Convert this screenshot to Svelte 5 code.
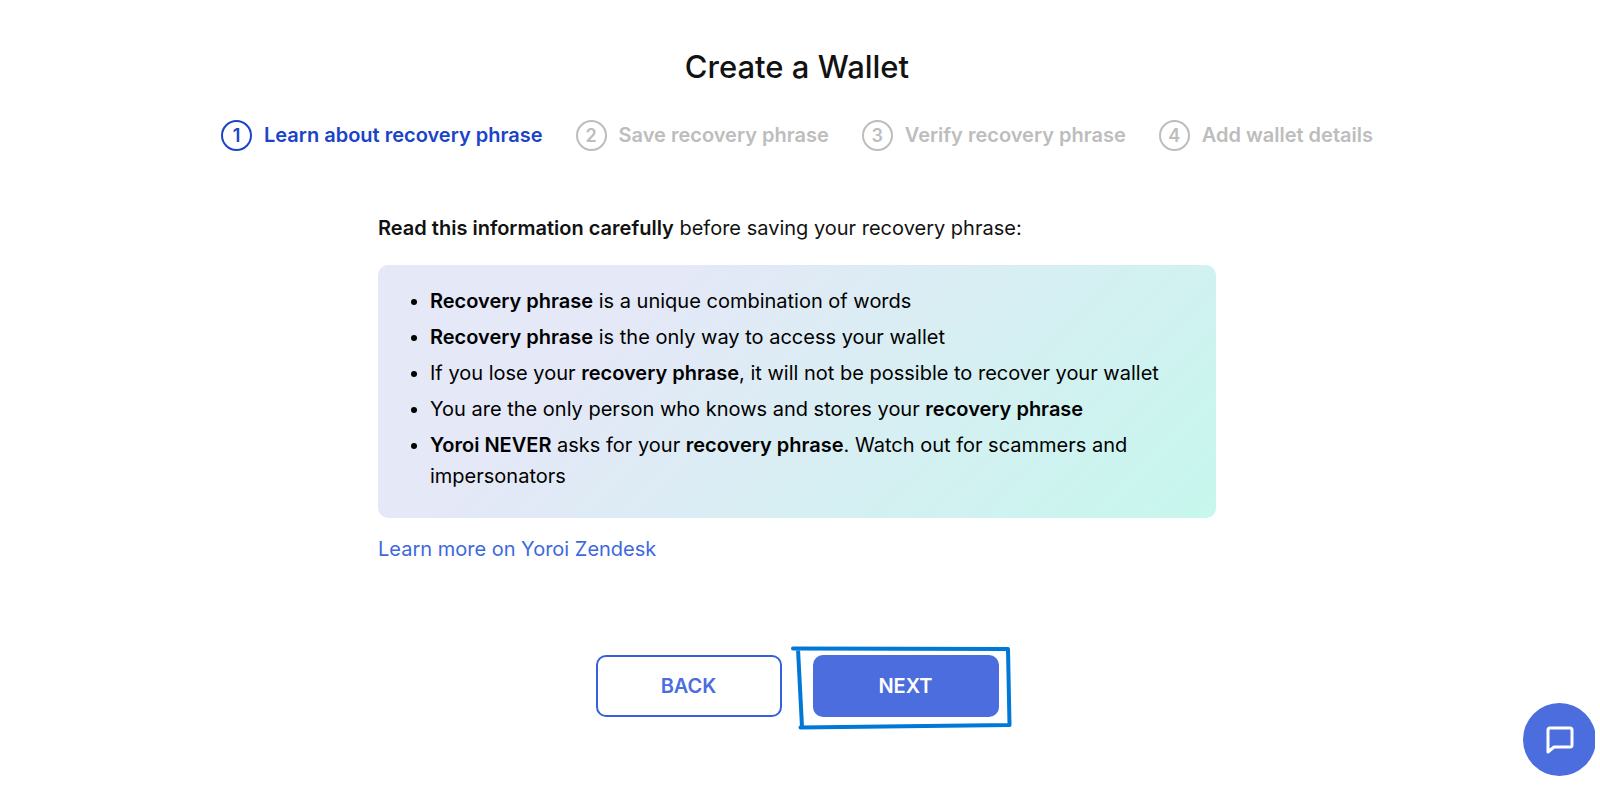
<script>
  const steps = [
    'Learn about recovery phrase',
    'Save recovery phrase',
    'Verify recovery phrase',
    'Add wallet details'
  ];
  const current = 0;
</script>

<div class="page">
  <main>
    <h1>Create a Wallet</h1>

    <ol class="steps">
      {#each steps as label, i}
        <li class:active={i === current} aria-current={i === current ? 'step' : undefined}>
          <span class="num">{i + 1}</span>
          <span>{label}</span>
        </li>
      {/each}
    </ol>

    <section class="content">
      <p><strong>Read this information carefully</strong> before saving your recovery phrase:</p>
      <ul class="card">
        <li><strong>Recovery phrase</strong> is a unique combination of words</li>
        <li><strong>Recovery phrase</strong> is the only way to access your wallet</li>
        <li>If you lose your <strong>recovery phrase</strong>, it will not be possible to recover your wallet</li>
        <li>You are the only person who knows and stores your <strong>recovery phrase</strong></li>
        <li><strong>Yoroi NEVER</strong> asks for your <strong>recovery phrase</strong>. Watch out for scammers and impersonators</li>
      </ul>
      <a href="#zendesk">Learn more on Yoroi Zendesk</a>
    </section>

    <div class="actions">
      <button type="button" class="back">BACK</button>
      <div class="marked">
        <button type="button" class="next">NEXT</button>
        <svg class="outline" viewBox="0 0 220 84" aria-hidden="true">
          <path d="M2 5.500L217 6L218.500 82L9.500 84.500M7 6L11 84" />
        </svg>
      </div>
    </div>
  </main>

  <button type="button" class="chat" aria-label="Open chat">
    <svg viewBox="0 0 28 28" aria-hidden="true">
      <path d="M2 26V4Q2 2 4 2H24Q26 2 26 4V19Q26 21 24 21H8Z" />
    </svg>
  </button>
</div>

<style>
  :global(body) {
    margin: 0;
    background: #fff;
  }

  .page {
    box-sizing: border-box;
    min-height: 100vh;
    margin-right: 5px;
    padding: 48px 25px 24px 24px;
    position: relative;
    overflow: hidden;
    color: #121212;
    font-family: Inter, Roboto, sans-serif;
    font-size: 20px;
    line-height: 31px;
    font-weight: 400;
  }

  main {
    display: flex;
    flex-direction: column;
    align-items: center;
  }

  h1 {
    margin: 0;
    font-size: 31px;
    line-height: 38px;
    font-weight: 500;
  }

  ul,
  ol,
  p {
    margin: 0;
    padding: 0;
  }

  .steps {
    display: flex;
    flex-wrap: wrap;
    justify-content: center;
    gap: 33px;
    margin-top: 34px;
    list-style: none;
    font-weight: 600;
    color: #bdbdbd;
  }

  .steps li {
    display: flex;
    align-items: center;
    gap: 12px;
  }

  .steps .active {
    color: #1a44c8;
  }

  .num {
    box-sizing: border-box;
    width: 31px;
    height: 31px;
    border: 2px solid currentColor;
    border-radius: 50%;
    font-size: 18px;
    line-height: 28px;
    text-align: center;
  }

  .content {
    width: 100%;
    max-width: 838px;
    margin-top: 62px;
  }

  strong {
    font-weight: 600;
  }

  .card {
    margin: 21px 0 16px;
    padding: 21px 36px 21px 52px;
    border-radius: 10px;
    background: linear-gradient(316deg, #c6f7ed 0%, #e4e8f7 71%);
    color: #000;
  }

  .card li {
    margin-bottom: 5px;
  }

  a {
    color: #3d68de;
    text-decoration: none;
  }

  .actions {
    display: flex;
    justify-content: center;
    gap: 31px;
    margin-top: 90px;
  }

  .marked {
    position: relative;
  }

  button {
    font: inherit;
    cursor: pointer;
  }

  .back,
  .next {
    box-sizing: border-box;
    display: block;
    width: 186px;
    height: 62px;
    border: 2px solid #3560dd;
    border-radius: 10px;
    background: #fff;
    color: #4b6dde;
    font-weight: 600;
  }

  .next {
    border-color: #4b6dde;
    background: #4b6dde;
    color: #fff;
  }

  .outline {
    position: absolute;
    left: -22px;
    top: -12px;
    width: 220px;
    height: 84px;
    overflow: visible;
    pointer-events: none;
    fill: none;
    stroke: #0078d7;
    stroke-width: 4;
    stroke-linecap: round;
    stroke-linejoin: round;
  }

  .chat {
    position: absolute;
    right: -1px;
    bottom: 11px;
    width: 73px;
    height: 73px;
    padding: 0;
    display: grid;
    place-items: center;
    border: 0;
    border-radius: 50%;
    background: #4b6dde;
  }

  .chat svg {
    width: 28px;
    height: 28px;
    fill: none;
    stroke: #fff;
    stroke-width: 3;
    stroke-linejoin: round;
  }
</style>
